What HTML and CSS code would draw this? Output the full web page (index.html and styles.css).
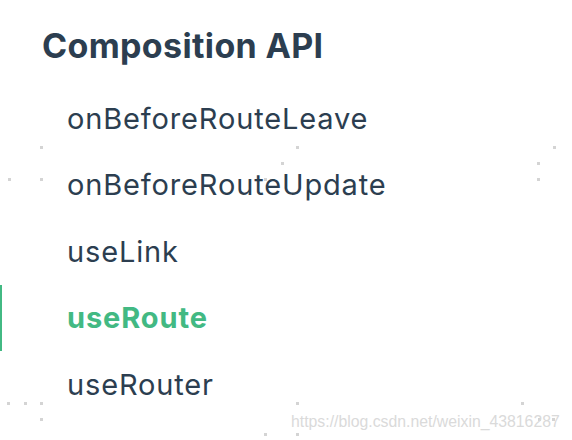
FILE: index.html
```html
<!DOCTYPE html>
<html lang="en">
<head>
    <meta charset="UTF-8">
    <title>Composition API</title>
    <link rel="stylesheet" href="styles.css">
</head>
<body>
    <div class="sidebar">
        <h3 class="group-title">Composition API</h3>
        <ul class="links">
            <li><a href="#">onBeforeRouteLeave</a></li>
            <li><a href="#">onBeforeRouteUpdate</a></li>
            <li><a href="#">useLink</a></li>
            <li class="active"><a href="#">useRoute</a></li>
            <li><a href="#">useRouter</a></li>
        </ul>

        <!-- scan noise from the original capture -->
        <span class="dot" style="left: 40px; top: 146px;"></span>
        <span class="dot" style="left: 296px; top: 146px;"></span>
        <span class="dot" style="left: 553px; top: 146px;"></span>
        <span class="dot" style="left: 281px; top: 162px;"></span>
        <span class="dot" style="left: 537px; top: 162px;"></span>
        <span class="dot" style="left: 8px; top: 178px;"></span>
        <span class="dot" style="left: 40px; top: 178px;"></span>
        <span class="dot" style="left: 264px; top: 178px;"></span>
        <span class="dot" style="left: 537px; top: 178px;"></span>
        <span class="dot" style="left: 7px; top: 402px;"></span>
        <span class="dot" style="left: 24px; top: 402px;"></span>
        <span class="dot" style="left: 40px; top: 402px;"></span>
        <span class="dot" style="left: 296px; top: 402px;"></span>
        <span class="dot" style="left: 521px; top: 402px;"></span>
        <span class="dot" style="left: 40px; top: 418px;"></span>
        <span class="dot" style="left: 538px; top: 418px;"></span>
        <span class="dot" style="left: 552px; top: 418px;"></span>
        <span class="dot" style="left: 264px; top: 433px;"></span>
        <span class="dot" style="left: 296px; top: 433px;"></span>

        <div class="watermark">https://blog.csdn.net/weixin_43816287</div>
    </div>
</body>
</html>
```

FILE: styles.css
```css
body {
    margin: 0;
    background: #fff;
    font-family: Inter, 'Helvetica Neue', Arial, sans-serif;
    color: #2c3e50;
}
.sidebar {
    position: relative;
    width: 572px;
    height: 440px;
    overflow: hidden;
    padding-top: 22px;
    box-sizing: border-box;
}
.group-title {
    margin: 0 0 0 42px;
    font-size: 34px;
    font-weight: 700;
    line-height: 48px;
    letter-spacing: 0.35px;
    color: #2c3e50;
}
.links {
    list-style: none;
    margin: 15px 0 0;
    padding: 0;
}
.links li {
    height: 66.5px;
    display: flex;
    align-items: center;
    padding-left: 67px;
    border-left: 2px solid transparent;
    margin-left: -2px;
}
.links a {
    font-size: 29px;
    letter-spacing: 0.85px;
    color: #2c3e50;
    text-decoration: none;
}
.links li.active {
    border-left-color: #42b983;
    margin-left: 0;
    padding-left: 65px;
}
.links li.active a {
    color: #42b983;
    font-weight: 700;
    letter-spacing: 0.9px;
}
.dot {
    position: absolute;
    width: 3px;
    height: 3px;
    background: #d4d4d4;
}
.watermark {
    position: absolute;
    left: 291px;
    top: 413px;
    font-family: Arial, 'Liberation Sans', sans-serif;
    font-size: 15.8px;
    color: #dadada;
    white-space: nowrap;
}
```
